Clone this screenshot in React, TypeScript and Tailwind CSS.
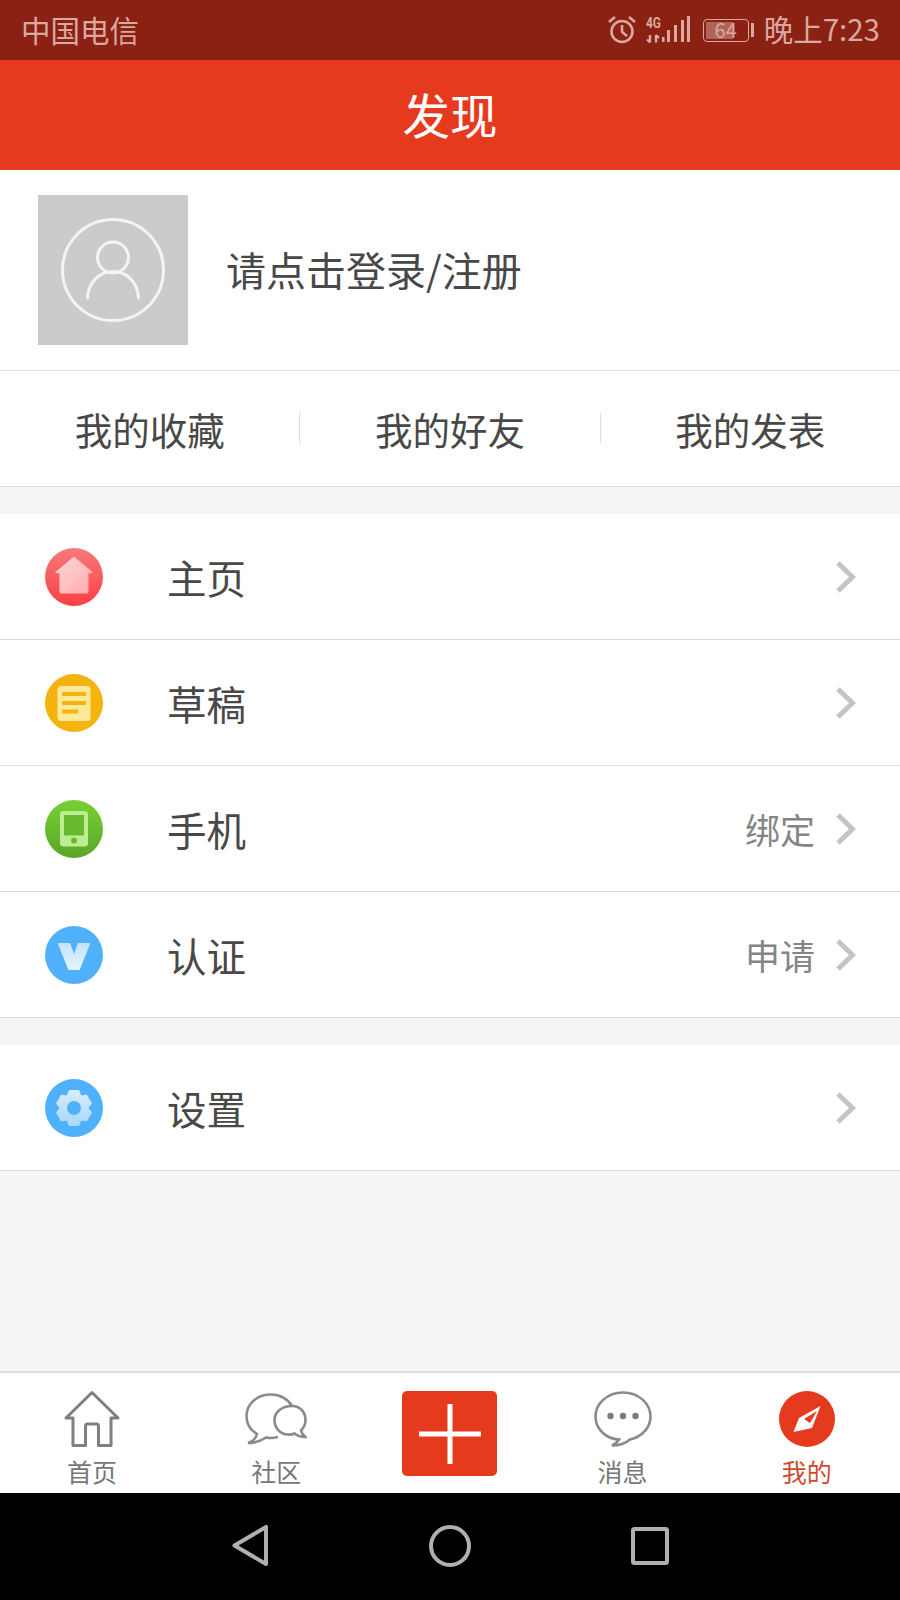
import React from "react";

const font = { fontFamily: '"Noto Sans CJK SC", "Noto Sans", sans-serif' };

function Chevron() {
  return (
    <svg width="20" height="32" viewBox="0 0 20 32" fill="none">
      <path d="M2 2 L16.5 16 L2 30" stroke="#c4c4c4" strokeWidth="5" />
    </svg>
  );
}

function HomeIcon() {
  return (
    <svg width="58" height="58" viewBox="0 0 58 58">
      <defs>
        <linearGradient id="hb" x1="0" y1="0" x2="0" y2="1">
          <stop offset="0" stopColor="#f77a7c" />
          <stop offset="1" stopColor="#fb3f42" />
        </linearGradient>
        <linearGradient id="hf" x1="0" y1="0" x2="1" y2="1">
          <stop offset="0" stopColor="#ffd6d7" />
          <stop offset="1" stopColor="#ffabad" />
        </linearGradient>
      </defs>
      <circle cx="29" cy="29" r="29" fill="url(#hb)" />
      <path d="M29 9 L47.5 24.5 L43 25 L43 44 Q43 45 42 45 L16 45 Q15 45 15 44 L15 25 L10.5 24.5 Z" fill="url(#hf)" stroke="url(#hf)" strokeLinejoin="round" />
    </svg>
  );
}

function DraftIcon() {
  return (
    <svg width="58" height="58" viewBox="0 0 58 58">
      <circle cx="29" cy="29" r="29" fill="#f4b30e" />
      <rect x="12.5" y="12" width="33" height="35" rx="3.5" fill="#fde998" />
      <rect x="17" y="18" width="24" height="4" fill="#f4b30e" />
      <rect x="17" y="27" width="24" height="4" fill="#f4b30e" />
      <rect x="17" y="35.5" width="16" height="4" fill="#f4b30e" />
    </svg>
  );
}

function PhoneIcon() {
  return (
    <svg width="58" height="58" viewBox="0 0 58 58">
      <defs>
        <linearGradient id="pb" x1="0" y1="0" x2="0" y2="1">
          <stop offset="0" stopColor="#78d032" />
          <stop offset="1" stopColor="#5aa62a" />
        </linearGradient>
      </defs>
      <circle cx="29" cy="29" r="29" fill="url(#pb)" />
      <rect x="15" y="11" width="28" height="35.5" rx="3.5" fill="#baee90" />
      <rect x="19" y="15" width="20" height="20.5" fill="#68ba2c" />
      <circle cx="29" cy="40.5" r="3" fill="#68ba2c" />
    </svg>
  );
}

function VIcon() {
  return (
    <svg width="58" height="58" viewBox="0 0 58 58">
      <defs>
        <linearGradient id="vf" x1="0" y1="0" x2="0" y2="1">
          <stop offset="0" stopColor="#c3e4fd" />
          <stop offset="1" stopColor="#e4f4fe" />
        </linearGradient>
      </defs>
      <circle cx="29" cy="29" r="29" fill="#4fb0fb" />
      <path d="M14 18 L24.5 18 L29 31 L33.5 18 L44 18 L34 43 L24 43 Z" fill="url(#vf)" stroke="url(#vf)" strokeWidth="2" strokeLinejoin="round" />
    </svg>
  );
}

function gearPath() {
  const pts: string[] = [];
  const pt = (r: number, deg: number) => {
    const t = ((deg - 90) * Math.PI) / 180;
    return `${(29 + r * Math.cos(t)).toFixed(2)} ${(29 + r * Math.sin(t)).toFixed(2)}`;
  };
  for (let i = 0; i < 6; i++) {
    const a = i * 60;
    pts.push(pt(13.5, a - 28), pt(17.5, a - 15), pt(17.5, a + 15), pt(13.5, a + 28));
  }
  return "M" + pts.join(" L") + " Z";
}

function GearIcon() {
  return (
    <svg width="58" height="58" viewBox="0 0 58 58">
      <defs>
        <linearGradient id="gf" x1="0" y1="0" x2="0" y2="1">
          <stop offset="0" stopColor="#d7ecfd" />
          <stop offset="1" stopColor="#a8d8fb" />
        </linearGradient>
      </defs>
      <circle cx="29" cy="29" r="29" fill="#4fb0fb" />
      <path d={gearPath()} fill="url(#gf)" stroke="url(#gf)" strokeWidth="2" strokeLinejoin="round" />
      <circle cx="29" cy="29" r="7" fill="#4fb0fb" />
    </svg>
  );
}

function Row({ icon, label, note, h = "h-[126px]" }: { icon: React.ReactNode; label: string; note?: string; h?: string }) {
  return (
    <div className={`${h} flex items-center bg-white border-b border-[#dcdcdc] pl-[45px] pr-[44px]`}>
      <div className="w-[122px] shrink-0 flex items-center">{icon}</div>
      <div className="flex-1 text-[39.5px] leading-none text-[#484848]">{label}</div>
      {note && <div className="text-[35px] leading-none text-[#858585] mr-[21px]">{note}</div>}
      <Chevron />
    </div>
  );
}

function Tab({ icon, label, active }: { icon: React.ReactNode; label: string; active?: boolean }) {
  return (
    <div className="flex-1 flex flex-col items-center pt-[17px]">
      <div className="h-[58px] flex items-center justify-center">{icon}</div>
      <div className={`mt-[8px] text-[25px] leading-[30px] ${active ? "text-[#cf4a30]" : "text-[#777777]"}`}>{label}</div>
    </div>
  );
}

export default function App() {
  return (
    <div className="w-[900px] h-[1600px] flex flex-col bg-[#f5f5f5] overflow-hidden" style={font}>
      {/* status bar */}
      <div className="h-[60px] shrink-0 bg-[#8a2113] flex items-center justify-between pl-[21px] pr-[20px] text-[#d9a9a1]">
        <div className="text-[29.5px] leading-none mb-[1px]">中国电信</div>
        <div className="flex items-center">
          <svg width="30" height="30" viewBox="0 0 30 30" fill="none" stroke="#d9a9a1" strokeWidth="2.6">
            <circle cx="15" cy="16.5" r="10.5" />
            <path d="M15 10 V17 L20 21" />
            <path d="M2 7 L8 2 M28 7 L22 2" />
          </svg>
          <svg width="44" height="30" viewBox="0 0 44 30" className="ml-[9px]" fill="#d9a9a1">
            <text x="0" y="13" fontSize="14" fontWeight="700" fontFamily="Roboto, sans-serif" textLength="15" lengthAdjust="spacingAndGlyphs">4G</text>
            <path d="M4 20 V27.5 M1 24.5 L4 27.5 M10 20 V27.5 M10 20 L13 23" stroke="#d9a9a1" strokeWidth="2.4" fill="none" />
            <rect x="16" y="22" width="2.5" height="5" />
            <rect x="21" y="15" width="3" height="12" />
            <rect x="28" y="10" width="3" height="17" />
            <rect x="35" y="5" width="3" height="22" />
            <rect x="41" y="1" width="3" height="26" />
          </svg>
          <div className="ml-[13px] w-[46px] h-[23px] rounded-[4px] border border-[#d9a9a1] p-[2px] flex">
            <div className="w-full h-full flex items-center justify-center text-[20px] leading-none bg-[linear-gradient(90deg,#b0655a_0%,#b0655a_68%,#8a2113_68%)]">
              64
            </div>
          </div>
          <div className="ml-[2px] w-[3px] h-[14px] bg-[#d9a9a1]" />
          <div className="ml-[10px] text-[29.5px] leading-none mb-[2px]">晚上7:23</div>
        </div>
      </div>

      {/* header */}
      <div className="h-[110px] shrink-0 bg-[#e63a1f] flex items-center justify-center text-white text-[47.5px] leading-none pb-[3px]">发现</div>

      {/* profile */}
      <div className="h-[201px] shrink-0 bg-white border-b border-[#dcdcdc] flex items-center pl-[38px]">
        <div className="w-[150px] h-[150px] bg-[#cbcbcb] flex items-center justify-center">
          <svg width="106" height="106" viewBox="0 0 106 106" fill="none" stroke="#f4f4f4" strokeWidth="3">
            <circle cx="53" cy="53" r="50.5" />
            <circle cx="53" cy="40.5" r="15.5" />
            <path d="M27.5 81 C28 66 39 54.5 53 54.5 C67 54.5 78 66 78.5 81" strokeLinecap="round" />
          </svg>
        </div>
        <div className="ml-[38px] text-[40px] leading-none text-[#484848] mb-[3px]">请点击登录/注册</div>
      </div>

      {/* quick links */}
      <div className="h-[116px] shrink-0 bg-white border-b border-[#dcdcdc] flex items-center text-[37.5px] leading-none text-[#484848]">
        <div className="flex-1 text-center">我的收藏</div>
        <div className="w-px h-[30px] bg-[#dedede] mb-[2px]" />
        <div className="flex-1 text-center">我的好友</div>
        <div className="w-px h-[30px] bg-[#dedede] mb-[2px]" />
        <div className="flex-1 text-center">我的发表</div>
      </div>

      {/* menu */}
      <div className="mt-[27px] shrink-0">
        <Row icon={<HomeIcon />} label="主页" />
        <Row icon={<DraftIcon />} label="草稿" />
        <Row icon={<PhoneIcon />} label="手机" note="绑定" />
        <Row icon={<VIcon />} label="认证" note="申请" />
      </div>
      <div className="mt-[27px] shrink-0">
        <Row icon={<GearIcon />} label="设置" />
      </div>

      <div className="flex-1" />

      {/* tab bar */}
      <div className="h-[122px] shrink-0 bg-white border-t-2 border-[#dddddd] flex pr-[1px]">
        <Tab
          label="首页"
          icon={
            <svg width="56" height="58" viewBox="0 0 56 58" fill="none" stroke="#7f7f7f" strokeWidth="3" strokeLinejoin="round">
              <path d="M2 28 L28 2.5 L54 28 L47 28 L47 55.5 L34.5 55.5 L34.5 36 Q34.5 34 32.5 34 L23.5 34 Q21.5 34 21.5 36 L21.5 55.5 L9 55.5 L9 28 Z" />
            </svg>
          }
        />
        <Tab
          label="社区"
          icon={
            <svg width="62" height="52" viewBox="0 0 62 52" fill="none" stroke="#8a8a8a" strokeWidth="2.6">
              <path d="M47 13 C43 6 35 1.5 26 1.5 C12 1.5 1.5 11 1.5 23 C1.5 31 6 37.5 12 41 C11 45 8 48.5 3 50 C10 50 16 48 21 44.5 C24 45.2 29 45 33 44" />
              <path d="M47 13 C55 13 60.5 19 60.5 27 C60.5 31 59 34.5 56 37.5 C56.5 40 58 42 60.5 44 C56 44 52.5 43 49.5 40.5 C47 41.5 45 42 43 41.5 C35 41 29.5 35 29.5 27 C29.5 19 37 13 47 13 Z" />
            </svg>
          }
        />
        <div className="w-[162px] shrink-0 flex justify-center pt-[18px]">
          <div className="w-[95px] h-[85px] rounded-[5px] bg-[#e63a1f] flex items-center justify-center">
            <svg width="62" height="62" viewBox="0 0 62 62" fill="none" stroke="#ffffff" strokeWidth="5">
              <path d="M0 31 H62 M31 1 V61" />
            </svg>
          </div>
        </div>
        <Tab
          label="消息"
          icon={
            <svg width="58" height="56" viewBox="0 0 58 56" fill="none" stroke="#8a8a8a" strokeWidth="2.6">
              <path d="M29 1.5 C13.5 1.5 1.5 12.5 1.5 25.5 C1.5 38 12 48 25 48.5 C23.5 51 21.5 53 18 54.5 C26 54.5 32 52 36 48.5 C48 46 56.5 36.5 56.5 25.5 C56.5 12.5 44.5 1.5 29 1.5 Z" />
              <circle cx="16.5" cy="25" r="3.2" fill="#7a7a7a" stroke="none" />
              <circle cx="29" cy="25" r="3.2" fill="#7a7a7a" stroke="none" />
              <circle cx="41.5" cy="25" r="3.2" fill="#7a7a7a" stroke="none" />
            </svg>
          }
        />
        <Tab
          active
          label="我的"
          icon={
            <svg width="56" height="56" viewBox="0 0 56 56">
              <circle cx="28" cy="28" r="28" fill="#e63a1f" />
              <path d="M41.5 15 L33 37 L14.5 41 L20 27 Z" fill="#ffffff" />
              <path d="M25 28 L38 20 L31 32 Z" fill="#e63a1f" />
            </svg>
          }
        />
      </div>

      {/* android nav */}
      <div className="h-[107px] shrink-0 bg-black flex items-center justify-between pl-[232px] pr-[231px] pb-[2px]">
        <svg width="36" height="41" viewBox="0 0 36 41" fill="none" stroke="#b0b0b0" strokeWidth="4" strokeLinejoin="round">
          <path d="M2.5 20.5 L34 2 V39 Z" />
        </svg>
        <svg width="42" height="42" viewBox="0 0 42 42" fill="none" stroke="#b0b0b0" strokeWidth="4">
          <circle cx="21" cy="21" r="19" />
        </svg>
        <svg width="38" height="38" viewBox="0 0 38 38" fill="none" stroke="#b0b0b0" strokeWidth="4" strokeLinejoin="round">
          <rect x="2" y="2" width="34" height="34" rx="1.5" />
        </svg>
      </div>
    </div>
  );
}
